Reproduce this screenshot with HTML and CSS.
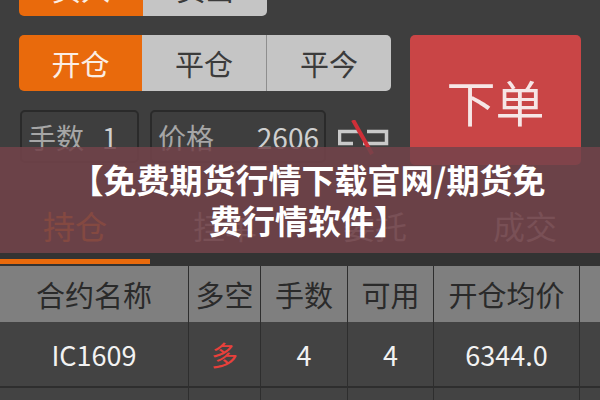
FILE: index.html
```html
<!DOCTYPE html>
<html lang="zh">
<head>
<meta charset="utf-8">
<link rel="stylesheet" href="styles.css">
</head>
<body>
<div class="page">
  <div class="row0">
    <div class="btn orange first">买入</div>
    <div class="btn gray last">卖出</div>
  </div>
  <div class="main">
    <div class="left">
      <div class="seg">
        <div class="btn orange first w123">开仓</div>
        <div class="btn gray w124 divider">平仓</div>
        <div class="btn gray last w124">平今</div>
      </div>
      <div class="inputs">
        <div class="field f1"><span class="lbl">手数</span><span class="val">1</span></div>
        <div class="field f2"><span class="lbl">价格</span><span class="val">2606</span></div>
        <svg class="unlink" width="52" height="36" viewBox="0 0 52 36">
          <path d="M22 11.5 H1.5 V23.5 H15" fill="none" stroke="#c9c9c9" stroke-width="3.5"/>
          <path d="M29 11.5 H48.5 V23.5 H25" fill="none" stroke="#c9c9c9" stroke-width="3.5"/>
          <line x1="15" y1="0" x2="34" y2="34" stroke="#cf2f38" stroke-width="4"/>
        </svg>
      </div>
    </div>
    <div class="order">下单</div>
  </div>
  <div class="tabs">
    <div class="tab active">持仓</div>
    <div class="tab">挂单</div>
    <div class="tab">委托</div>
    <div class="tab">成交</div>
  </div>
  <div class="table">
    <div class="hd c1">合约名称</div>
    <div class="hd">多空</div>
    <div class="hd">手数</div>
    <div class="hd">可用</div>
    <div class="hd">开仓均价</div>
    <div class="hd"></div>
    <div class="td c1">IC1609</div>
    <div class="td red">多</div>
    <div class="td">4</div>
    <div class="td">4</div>
    <div class="td">6344.0</div>
    <div class="td"></div>
    <div class="td c1 next"></div>
    <div class="td next"></div>
    <div class="td next"></div>
    <div class="td next"></div>
    <div class="td next"></div>
    <div class="td next"></div>
  </div>
  <div class="banner">【免费期货行情下载官网/期货免费行情软件】</div>
</div>
</body>
</html>
```

FILE: styles.css
```css
html, body {
  margin: 0;
  padding: 0;
}
body {
  background: #3e3e3e;
  font-family: "Noto Sans CJK SC", "Noto Sans", sans-serif;
  width: 600px;
  height: 400px;
  overflow: hidden;
}
.page {
  position: relative;
  width: 600px;
  height: 400px;
  overflow: hidden;
}
.row0 {
  display: flex;
  margin-top: -40px;
  margin-left: 19px;
  height: 56px;
}
.row0 .btn { width: 124px; }
.btn {
  display: flex;
  align-items: center;
  justify-content: center;
  font-size: 29px;
  height: 56px;
  box-sizing: border-box;
}
.orange { background: #e96a0c; color: #fbeee4; }
.gray { background: #c5c5c5; color: #3b3b3b; }
.first { border-radius: 5px 0 0 5px; }
.last { border-radius: 0 5px 5px 0; }
.w123 { width: 123px; }
.w124 { width: 124px; }
.divider { border-right: 1px solid #8e8e8e; width: 125px; }
.main {
  display: flex;
  margin-top: 19px;
  margin-left: 19px;
}
.left { width: 372px; }
.seg { display: flex; }
.inputs {
  display: flex;
  margin-top: 19px;
}
.field {
  box-sizing: border-box;
  height: 53px;
  border: 2px solid #2a2a2a;
  border-radius: 5px;
  display: flex;
  align-items: center;
  padding-left: 6px;
  font-size: 28px;
}
.f1 { width: 119px; margin-left: 1px; }
.f2 { width: 176px; margin-left: 11px; justify-content: space-between; padding-right: 5px; }
.lbl { color: #a6a6a6; }
.val { color: #cfcfcf; font-size: 28px; }
.f1 .val { margin-left: 18px; }
.unlink { margin-left: 12px; margin-top: 10px; display: block; }
.order {
  width: 171px;
  height: 130px;
  margin-left: 19px;
  background: #c94546;
  border-radius: 5px;
  color: #f6e6e6;
  font-size: 49px;
  display: flex;
  align-items: center;
  justify-content: center;
}
.tabs {
  display: flex;
  margin-top: 25px;
  background: #333333;
  padding-bottom: 2px;
}
.tab {
  flex: 1;
  height: 69px;
  border-bottom: 5px solid transparent;
  display: flex;
  align-items: center;
  justify-content: center;
  font-size: 32px;
  color: #9a9a9a;
}
.tab.active { color: #e96a0c; border-bottom-color: #e96a0c; }
.table {
  display: grid;
  grid-template-columns: 188px 72px 87px 86px 146px 1fr;
  grid-template-rows: 56px 66px 40px;
}
.hd {
  background: #7f7f7f;
  color: #2a2a2a;
  font-size: 29px;
  display: flex;
  align-items: center;
  justify-content: center;
  border-left: 1px solid #2e2e2e;
}
.td {
  background: #434343;
  color: #f2f2f2;
  font-size: 27px;
  display: flex;
  align-items: center;
  justify-content: center;
  border-left: 1px solid #2e2e2e;
  border-bottom: 2px solid #2e2e2e;
}
.td.next { border-bottom: none; }
.c1 { border-left: none; }
.red { color: #e8403b; }
.banner {
  position: absolute;
  left: 0;
  top: 147px;
  width: 600px;
  height: 106px;
  box-sizing: border-box;
  padding: 12px 40px 0 56px;
  background: rgba(115, 68, 74, 0.86);
  color: #ffffff;
  font-weight: 700;
  font-size: 33px;
  line-height: 41px;
  text-align: center;
}
```
